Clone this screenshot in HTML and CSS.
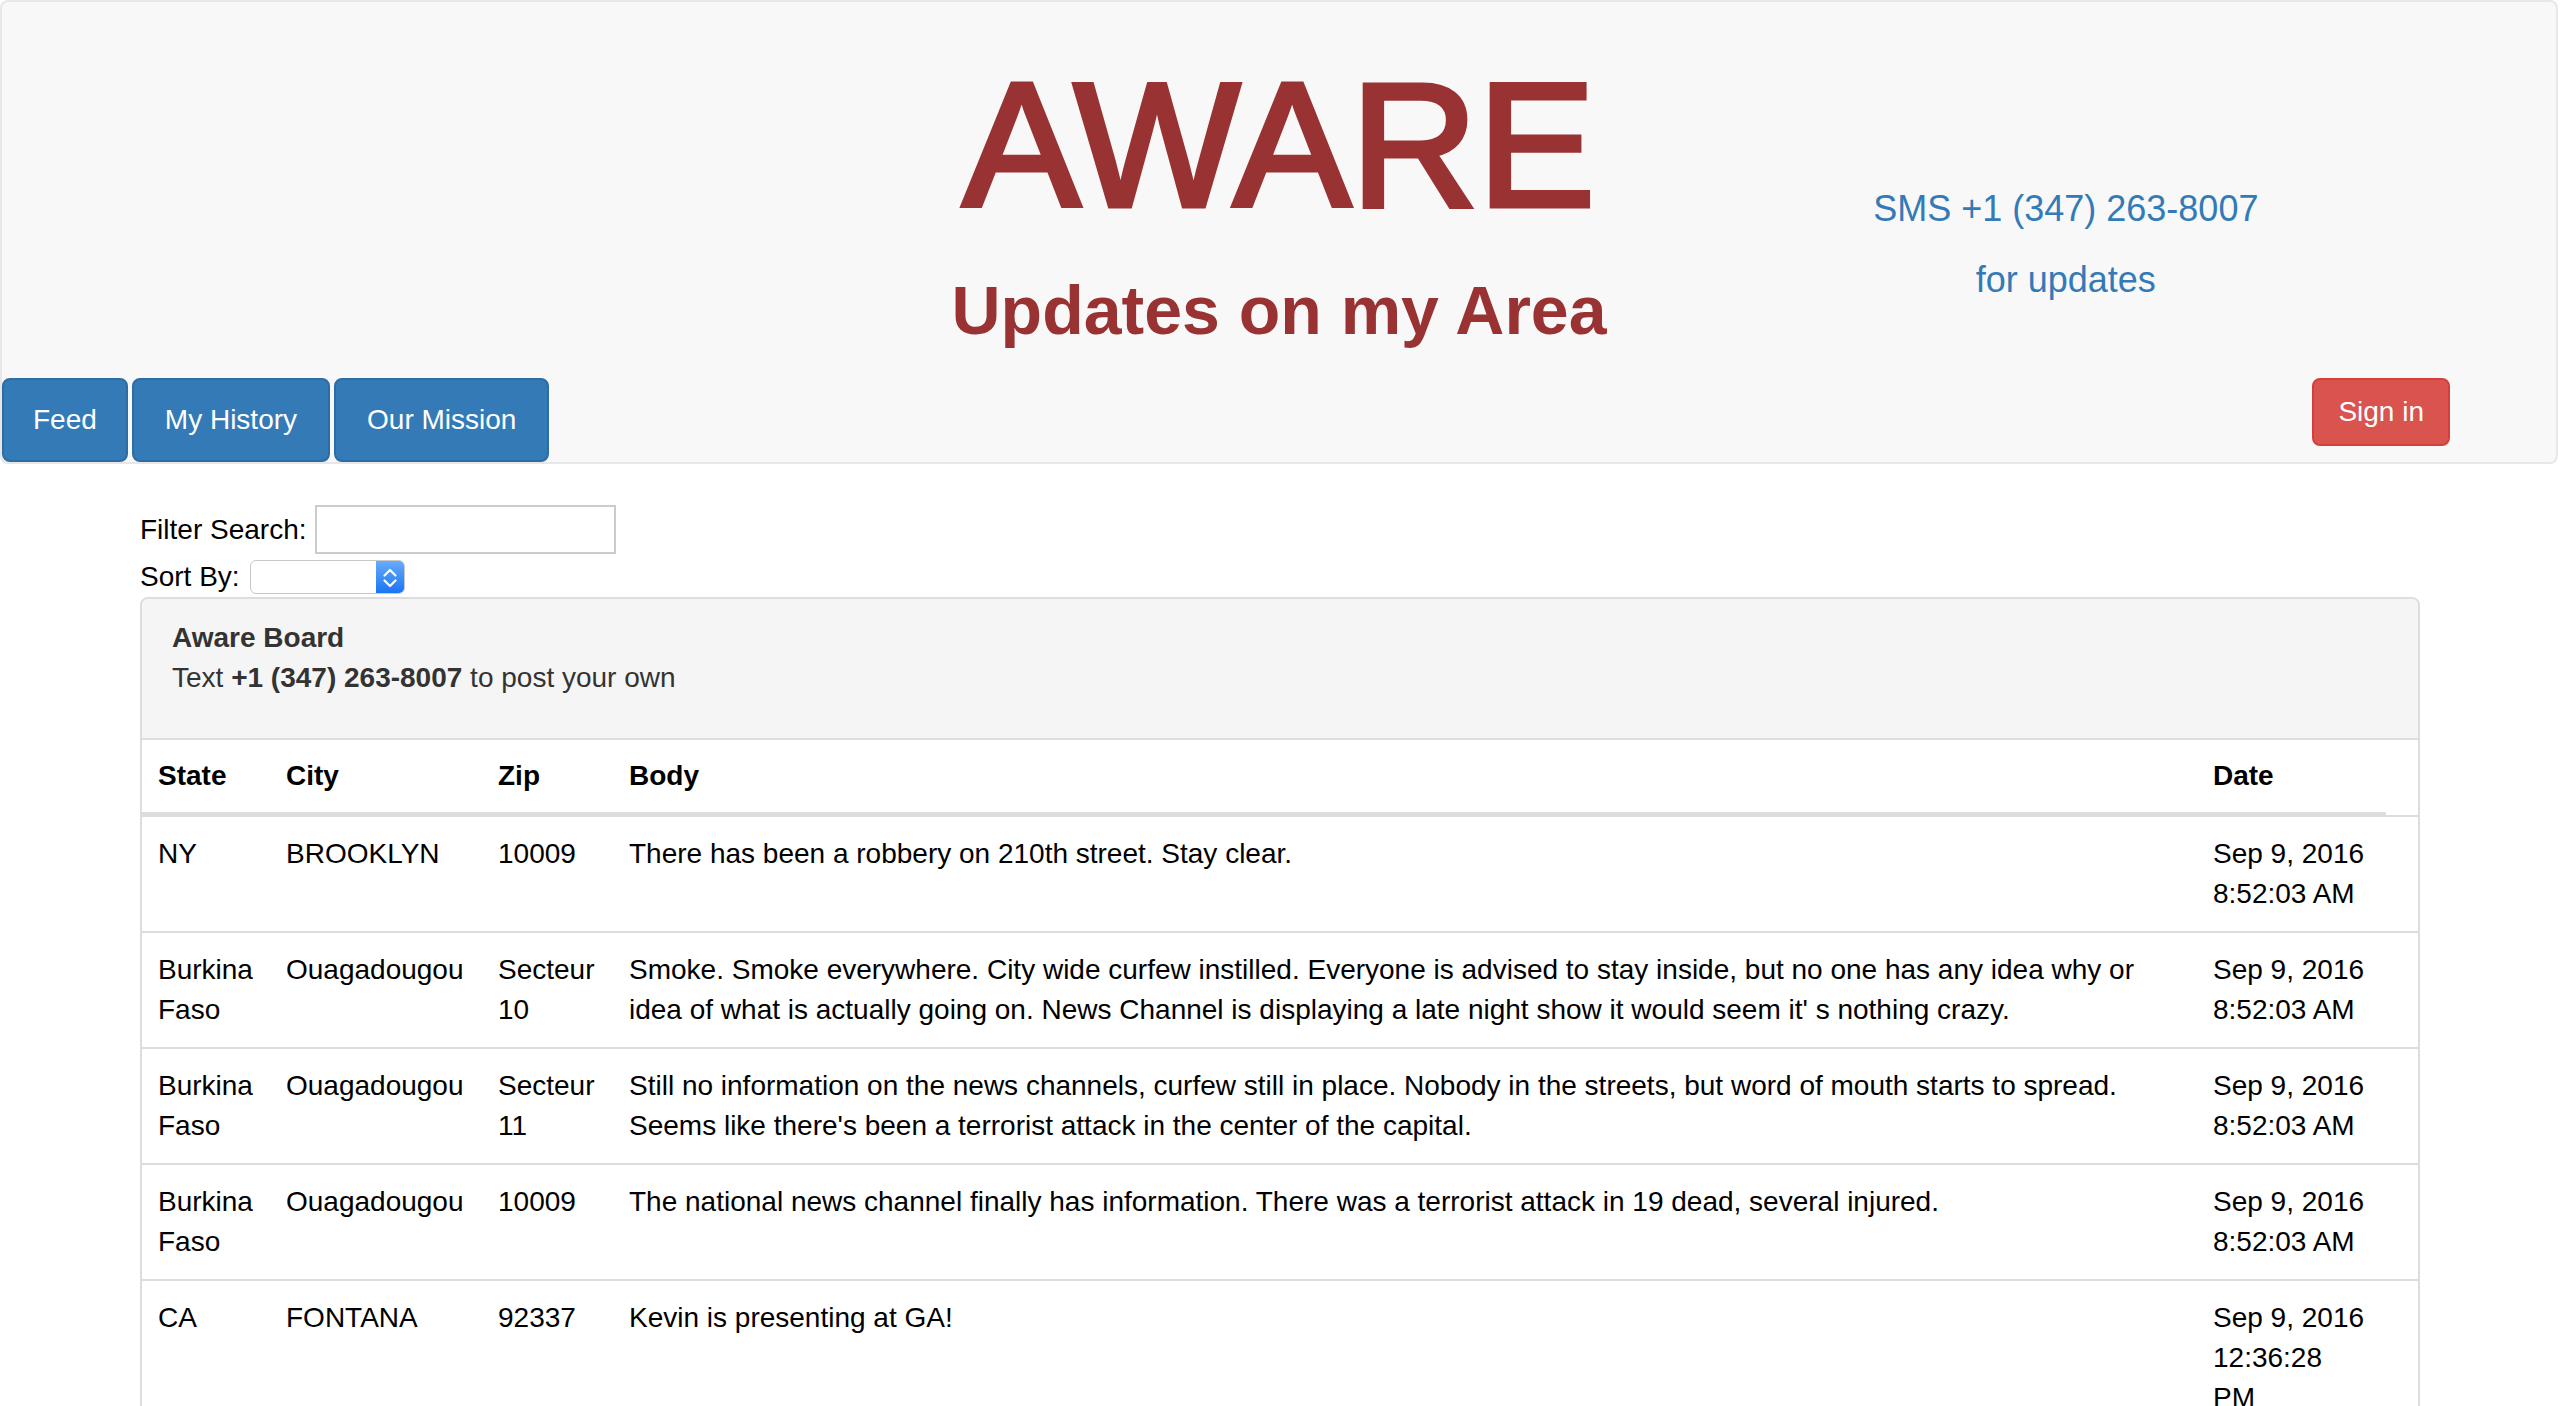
FILE: index.html
```html
<!DOCTYPE html>
<html lang="en">
<head>
<meta charset="utf-8">
<title>Aware</title>
<link rel="stylesheet" href="styles.css">
</head>
<body>
<nav class="navbar">
  <div class="brand-row">
    <div class="brand-spacer"></div>
    <div class="brand">
      <h1 class="brand-title">AWARE</h1>
      <h2 class="brand-sub">Updates on my Area</h2>
    </div>
    <div class="sms">
      <p class="sms-line">SMS +1 (347) 263-8007</p>
      <p class="sms-line sms-line-2">for updates</p>
    </div>
  </div>
  <div class="nav-row">
    <div class="nav-tabs">
      <a class="btn btn-primary nav-btn nav-btn-feed" href="#">Feed</a>
      <a class="btn btn-primary nav-btn" href="#">My History</a>
      <a class="btn btn-primary nav-btn" href="#">Our Mission</a>
    </div>
    <a class="btn btn-danger signin" href="#">Sign in</a>
  </div>
</nav>

<main class="container">
  <div class="filter-row">
    <label class="field-label" for="filter">Filter Search:</label>
    <input id="filter" class="filter-input" type="text">
  </div>
  <div class="sort-row">
    <label class="field-label" for="sort">Sort By:</label>
    <div class="select-wrap">
      <select id="sort" class="sort-select"><option></option></select>
      <span class="select-arrow">
        <svg width="28" height="34" viewBox="0 0 28 34"><path d="M8.5 14.5 L14 9 L19.5 14.5" fill="none" stroke="#fff" stroke-width="2.2" stroke-linecap="round" stroke-linejoin="round"/><path d="M8.5 19.5 L14 25 L19.5 19.5" fill="none" stroke="#fff" stroke-width="2.2" stroke-linecap="round" stroke-linejoin="round"/></svg>
      </span>
    </div>
  </div>

  <section class="panel">
    <div class="panel-heading">
      <div class="panel-title">Aware Board</div>
      <div class="panel-text">Text <strong>+1 (347) 263-8007</strong> to post your own</div>
    </div>
    <table class="board">
      <colgroup>
        <col class="col-state">
        <col class="col-city">
        <col class="col-zip">
        <col class="col-body">
        <col class="col-date">
      </colgroup>
      <thead>
        <tr><th>State</th><th>City</th><th>Zip</th><th>Body</th><th>Date</th></tr>
      </thead>
      <tbody>
        <tr>
          <td>NY</td><td>BROOKLYN</td><td>10009</td>
          <td>There has been a robbery on 210th street. Stay clear.</td>
          <td>Sep 9, 2016 8:52:03 AM</td>
        </tr>
        <tr>
          <td>Burkina Faso</td><td>Ouagadougou</td><td>Secteur 10</td>
          <td>Smoke. Smoke everywhere. City wide curfew instilled. Everyone is advised to stay inside, but no one has any idea why or idea of what is actually going on. News Channel is displaying a late night show it would seem it' s nothing crazy.</td>
          <td>Sep 9, 2016 8:52:03 AM</td>
        </tr>
        <tr>
          <td>Burkina Faso</td><td>Ouagadougou</td><td>Secteur 11</td>
          <td>Still no information on the news channels, curfew still in place. Nobody in the streets, but word of mouth starts to spread. Seems like there's been a terrorist attack in the center of the capital.</td>
          <td>Sep 9, 2016 8:52:03 AM</td>
        </tr>
        <tr>
          <td>Burkina Faso</td><td>Ouagadougou</td><td>10009</td>
          <td>The national news channel finally has information. There was a terrorist attack in 19 dead, several injured.</td>
          <td>Sep 9, 2016 8:52:03 AM</td>
        </tr>
        <tr>
          <td>CA</td><td>FONTANA</td><td>92337</td>
          <td>Kevin is presenting at GA!</td>
          <td>Sep 9, 2016 12:36:28 PM</td>
        </tr>
      </tbody>
    </table>
  </section>
</main>
</body>
</html>
```

FILE: styles.css
```css
* { box-sizing: border-box; }

html, body {
  margin: 0;
  padding: 0;
  background: #ffffff;
}

body {
  font-family: "Liberation Sans", Arial, Helvetica, sans-serif;
  font-size: 28px;
  line-height: 40px;
  color: #000000;
}

/* ---------- Navbar ---------- */
.navbar {
  margin-right: 2px;
  border: 2px solid #e7e7e7;
  border-radius: 8px;
  background: #f8f8f8;
}

.brand-row {
  display: grid;
  grid-template-columns: 1fr 1fr 1fr;
  height: 376px;
}

.brand {
  text-align: center;
  padding-top: 55px;
}

.brand-title {
  margin: 0;
  font-size: 176px;
  line-height: 176px;
  font-weight: normal;
  color: #993333;
  -webkit-text-stroke: 5px #993333;
}

.brand-sub {
  margin: 43px 0 0;
  font-size: 68px;
  line-height: 68px;
  font-weight: bold;
  color: #993333;
}

.sms {
  text-align: center;
  padding-top: 187px;
  padding-right: 129px;
  color: #337ab7;
}

.sms-line {
  margin: 0;
  font-size: 36px;
  line-height: 40px;
}

.sms-line-2 {
  margin-top: 31px;
}

.nav-row {
  display: flex;
  justify-content: space-between;
  align-items: flex-start;
  height: 84px;
}

.nav-tabs {
  display: flex;
  gap: 4px;
}

.btn {
  display: inline-block;
  font-size: 28px;
  line-height: 40px;
  color: #ffffff;
  text-decoration: none;
  border: 2px solid transparent;
  border-radius: 8px;
  white-space: nowrap;
}

.btn-primary {
  background: #337ab7;
  border-color: #2e6da4;
}

.btn-danger {
  background: #d9534f;
  border-color: #d43f3a;
}

.nav-btn {
  padding: 20px 31px;
}

.nav-btn-feed {
  padding: 20px 29px;
}

.signin {
  padding: 12px 24px;
  margin-right: 106px;
}

/* ---------- Content ---------- */
.container {
  width: 2280px;
  margin: 0 auto;
  padding-top: 41px;
}

.filter-row {
  display: flex;
  align-items: center;
  gap: 8px;
  height: 49px;
}

.sort-row {
  display: flex;
  align-items: center;
  gap: 10px;
  height: 40px;
  margin-top: 3px;
}

.field-label {
  color: #000;
}

.filter-input {
  width: 301px;
  height: 49px;
  border: 2px solid #cccccc;
  border-radius: 0;
  background: #fff;
  font: inherit;
  padding: 0 8px;
  margin: 0;
}

.select-wrap {
  display: flex;
  width: 155px;
  height: 34px;
  border: 1px solid #c8c8c8;
  border-radius: 6px;
  background: #fff;
  overflow: hidden;
}

.sort-select {
  flex: 1;
  min-width: 0;
  -webkit-appearance: none;
  appearance: none;
  border: 0;
  background: transparent;
  font: inherit;
  font-size: 24px;
  margin: 0;
  padding: 0 8px;
}

.select-arrow {
  display: flex;
  width: 28px;
  height: 100%;
  background: linear-gradient(#67abfb, #1a75f3);
}

/* ---------- Panel ---------- */
.panel {
  border: 2px solid #dddddd;
  border-radius: 8px;
  background: #fff;
  overflow: hidden;
}

.panel-heading {
  background: #f5f5f5;
  border-bottom: 2px solid #dddddd;
  padding: 19px 30px 40px;
  color: #333333;
}

.panel-title {
  font-weight: bold;
}

.board {
  width: 100%;
  table-layout: fixed;
  border-collapse: separate;
  border-spacing: 0;
}

.col-state { width: 128px; }
.col-city  { width: 212px; }
.col-zip   { width: 131px; }
.col-body  { width: 1584px; }
.col-date  { width: 221px; }

.board th {
  text-align: left;
  font-weight: bold;
  padding: 16px 16px;
  border-bottom: 3px solid #dddddd;
  vertical-align: bottom;
}

.board th:last-child {
  border-bottom: 0;
  padding-bottom: 19px;
  padding-right: 50px;
  background: linear-gradient(#dddddd, #dddddd) no-repeat left bottom / calc(100% - 32px) 3px;
}

.board td {
  padding: 17px 16px;
  border-top: 2px solid #dddddd;
  vertical-align: top;
}

.board td:last-child {
  padding-right: 50px;
}
```
